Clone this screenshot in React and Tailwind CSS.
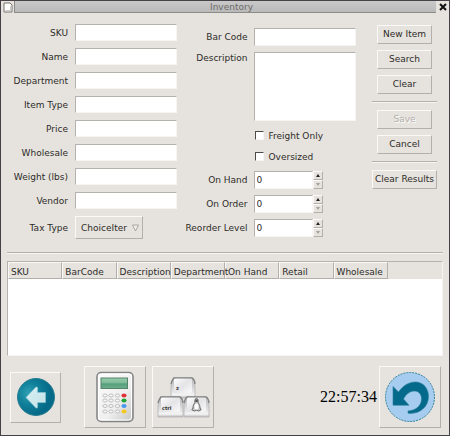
import React from "react";

const sunken =
  "border border-t-[#b5b1ac] border-l-[#b5b1ac] border-b-[#f6f5f3] border-r-[#f6f5f3] bg-white rounded-none outline-none";
const raised =
  "border border-t-[#faf9f8] border-l-[#faf9f8] border-b-[#b3afaa] border-r-[#b3afaa] bg-[#e6e3de]";

const leftFields = [
  ["sku", "SKU"],
  ["name", "Name"],
  ["department", "Department"],
  ["item-type", "Item Type"],
  ["price", "Price"],
  ["wholesale", "Wholesale"],
  ["weight", "Weight (lbs)"],
  ["vendor", "Vendor"],
];

const columns = ["SKU", "BarCode", "Description", "Department", "On Hand", "Retail", "Wholesale"];

function TitleBar() {
  return (
    <header className="flex h-3 items-stretch">
      <button aria-label="Window menu" className="flex w-[13px] items-center justify-center">
        <svg width="10" height="11" viewBox="0 0 10 11">
          <path d="M1 1H7L9 3V10H1Z" fill="#fff" stroke="#77736f" />
          <path d="M2.5 8.5H8M7.5 4V9" stroke="#cfccc8" fill="none" />
        </svg>
      </button>
      <h1 className="flex-1 border-b border-l border-[#8e8c89] bg-linear-to-b from-[#c9c9c9] to-[#b9b9b9] pl-3 text-center leading-[13px] text-[#6d6b69]">
        Inventory
      </h1>
      <button aria-label="Close" className="flex w-[13px] items-center justify-center">
        <svg width="8" height="8" viewBox="0 0 8 8">
          <path d="M1 1L7 7M7 1L1 7" stroke="#111" strokeWidth="2" />
        </svg>
      </button>
    </header>
  );
}

function Separator() {
  return <hr className="my-px h-[2px] w-full border-t border-b border-t-[#b3afaa] border-b-[#f6f5f3]" />;
}

function Spinner({ id, label }) {
  return (
    <>
      <label htmlFor={id} className="text-right">
        {label}
      </label>
      <div className="flex h-[18px] w-[69px]">
        <input id={id} defaultValue="0" className={`w-[59px] px-[2px] ${sunken}`} />
        <div className="flex w-[10px] flex-col">
          <button aria-label={`Increase ${label}`} className={`flex h-[9px] items-center justify-center ${raised}`}>
            <svg width="4" height="3" viewBox="0 0 4 3">
              <path d="M2 0L4 3H0Z" fill="#222" />
            </svg>
          </button>
          <button aria-label={`Decrease ${label}`} className={`flex h-[9px] items-center justify-center ${raised}`}>
            <svg width="4" height="3" viewBox="0 0 4 3">
              <path d="M0 0H4L2 3Z" fill="#a5a19c" />
            </svg>
          </button>
        </div>
      </div>
    </>
  );
}

function CheckBox({ label }) {
  return (
    <label className="flex h-[21px] items-center gap-[5px]">
      <input
        type="checkbox"
        className="size-[9px] appearance-none border border-t-[#4d4a47] border-l-[#4d4a47] border-r-[#f6f5f3] border-b-[#f6f5f3] bg-white checked:bg-[#4d4a47]"
      />
      {label}
    </label>
  );
}

function ActionButton({ children, wide, disabled }) {
  return (
    <button
      disabled={disabled}
      className={`h-[19px] whitespace-nowrap leading-[17px] disabled:text-[#b1ada8] disabled:[text-shadow:1px_1px_0_#fff] ${
        wide ? "w-[65px]" : "w-[55px]"
      } ${raised}`}
    >
      {children}
    </button>
  );
}

function BackIcon() {
  return (
    <svg width="40" height="40" viewBox="0 0 40 40">
      <defs>
        <radialGradient id="back-disc" cx="0.3" cy="0.4" r="0.6">
          <stop offset="0" stopColor="#2fa0b4" />
          <stop offset="0.5" stopColor="#10809a" />
          <stop offset="1" stopColor="#056a87" />
        </radialGradient>
        <linearGradient id="back-arrow" x1="0" y1="0" x2="1" y2="1">
          <stop offset="0" stopColor="#d9f1f3" />
          <stop offset="1" stopColor="#c3e2e8" />
        </linearGradient>
      </defs>
      <circle cx="20" cy="20" r="18.5" fill="url(#back-disc)" stroke="#2a7e92" />
      <path
        d="M10 20.5L20 10Q21.5 9.5 21.5 11V15.5H29.5V25.5H21.5V30Q21.5 31.5 20 31Z"
        fill="url(#back-arrow)"
        stroke="#8fc9d4"
        strokeWidth="0.6"
      />
    </svg>
  );
}

function CalculatorIcon() {
  const rows = [
    [24.5, "#e0343a"],
    [29.5, "#22a637"],
    [35, "#4a97ee"],
    [40.5, "#f4c81e"],
  ];
  return (
    <svg width="38" height="52" viewBox="0 0 38 52">
      <defs>
        <linearGradient id="calc-body" x1="0" y1="0" x2="1" y2="1">
          <stop offset="0" stopColor="#fdfdfd" />
          <stop offset="0.6" stopColor="#efefef" />
          <stop offset="1" stopColor="#c4c4c4" />
        </linearGradient>
        <linearGradient id="calc-screen" x1="0" y1="0" x2="0" y2="1">
          <stop offset="0" stopColor="#98ccac" />
          <stop offset="0.48" stopColor="#7dba97" />
          <stop offset="0.55" stopColor="#559e7c" />
          <stop offset="1" stopColor="#6fb08c" />
        </linearGradient>
      </defs>
      <rect x="1" y="1.5" width="36" height="49" rx="4" fill="url(#calc-body)" stroke="#808283" strokeWidth="1.5" />
      <rect x="2.5" y="3" width="33" height="46" rx="3" fill="none" stroke="#fff" />
      <rect x="5" y="7" width="26.5" height="10.5" fill="url(#calc-screen)" stroke="#56836b" />
      {rows.map(([y, color]) => (
        <g key={color}>
          {[9, 15, 21.5].map((x) => (
            <ellipse key={x} cx={x} cy={y} rx="2.2" ry="1.5" fill="#f7f7f7" stroke="#b0b0b0" strokeWidth="0.8" />
          ))}
          <ellipse cx="28" cy={y} rx="2.6" ry="1.9" fill={color} />
        </g>
      ))}
    </svg>
  );
}

function KeyCap({ x, y, width, children }) {
  return (
    <g transform={`translate(${x} ${y})`}>
      <path
        d={`M1 20V8Q2 4 4 1H${width - 4}Q${width - 1} 4 ${width - 1} 9V21H1Z`}
        fill="url(#key-side)"
        stroke="#b4b3b3"
        strokeWidth="0.8"
      />
      <rect x="4" y="1" width={width - 8} height="15" rx="2" fill="url(#key-top)" />
      <path
        d={`M1 7Q2 3 4 0.8H${width - 4}Q${width - 1} 3 ${width - 1} 7`}
        fill="none"
        stroke="#828182"
        strokeWidth="1.3"
      />
      {children}
    </g>
  );
}

function KeyboardIcon() {
  return (
    <svg width="53" height="43" viewBox="0 0 53 43" className="font-['DejaVu_Sans',sans-serif]">
      <defs>
        <linearGradient id="key-side" x1="0" y1="0" x2="0" y2="1">
          <stop offset="0" stopColor="#b5b5b7" />
          <stop offset="0.7" stopColor="#e6e6e8" />
          <stop offset="0.85" stopColor="#f6f6f7" />
          <stop offset="1" stopColor="#b8b8ba" />
        </linearGradient>
        <linearGradient id="key-top" x1="0" y1="0" x2="1" y2="1">
          <stop offset="0" stopColor="#fff" />
          <stop offset="0.5" stopColor="#e4e4e7" />
          <stop offset="1" stopColor="#fafafa" />
        </linearGradient>
      </defs>
      <KeyCap x={13} y={1} width={26}>
        <text x="6" y="13" fontSize="5" fontWeight="700" fill="#333">
          z
        </text>
      </KeyCap>
      <KeyCap x={0} y={20} width={27}>
        <text x="5" y="14" fontSize="5" fontWeight="700" fill="#333">
          ctrl
        </text>
      </KeyCap>
      <KeyCap x={26} y={20} width={27}>
        <path
          d="M13.5 2.5C11.8 2.5 11.8 4.5 11.9 6.5C10.8 8.5 9.8 10 10 12L8.8 13.8L11.5 15L13.5 14.2L15.5 15L18.200 13.8L17 12C17.2 10 16.2 8.5 15.1 6.5C15.200 4.5 15.200 2.5 13.5 2.5Z"
          fill="#c9c9ca"
          stroke="#5a5a5b"
          strokeWidth="0.9"
        />
        <path d="M12.300 3.500H14.700V6H12.300Z" fill="#555" />
        <ellipse cx="13.5" cy="10.5" rx="2" ry="3" fill="#fff" />
      </KeyCap>
    </svg>
  );
}

function UndoIcon() {
  return (
    <svg width="52" height="52" viewBox="0 0 52 52">
      <circle cx="26" cy="26" r="24.5" fill="#a6ccf0" stroke="#2d7f96" strokeDasharray="2 1" />
      <path
        d="M9 15.5L14.5 21C19 14.500 25 11 31.500 11C39.500 11.200 44.500 17.500 44.500 25.500C44.500 36 35.500 43.500 24 42.300V40C32 39.500 37.500 34.500 37.500 28C37.500 23 34.500 20 30.500 20C26 20 22 23 19.500 28L25 34.200H9Z"
        fill="#04698a"
        stroke="#27809b"
        strokeWidth="0.6"
      />
    </svg>
  );
}

function ToolButton({ label, small, children }) {
  return (
    <button
      aria-label={label}
      className={`flex shrink-0 items-center justify-center ${small ? "size-[51px]" : "size-[62px]"} ${raised}`}
    >
      {children}
    </button>
  );
}

export default function App() {
  return (
    <div className="flex min-h-screen flex-col border border-[#454146] bg-[#e6e3de] font-['DejaVu_Sans','Liberation_Sans',sans-serif] text-[9px] leading-3 text-[#2d2b29]">
      <TitleBar />

      <main className="flex flex-1 flex-col px-[6px]">
        <div className="flex items-start justify-between">
          <div className="mt-[11px] grid grid-cols-[61px_auto] items-center gap-x-[7px] gap-y-[7px]">
            {leftFields.map(([id, label]) => (
              <React.Fragment key={id}>
                <label htmlFor={id} className="text-right whitespace-nowrap">
                  {label}
                </label>
                <input id={id} className={`h-[17px] w-[102px] px-[2px] ${sunken}`} />
              </React.Fragment>
            ))}
            <label htmlFor="tax-type" className="text-right">
              Tax Type
            </label>
            <div className="grid w-[68px] items-center">
              <select
                id="tax-type"
                className={`col-start-1 row-start-1 h-[23px] appearance-none rounded-none pl-[5px] outline-none ${raised}`}
              >
                <option>ChoiceIter</option>
              </select>
              <svg
                className="pointer-events-none col-start-1 row-start-1 mr-1 justify-self-end"
                width="7"
                height="8"
                viewBox="0 0 7 8"
              >
                <path d="M0.5 1H6.5L3.5 7Z" fill="#f1efec" stroke="#9a9691" strokeWidth="0.8" />
              </svg>
            </div>
          </div>

          <div className="mt-[15px] mr-2 grid grid-cols-[auto_102px] items-center gap-x-[6px] gap-y-[6px]">
            <label htmlFor="bar-code" className="text-right">
              Bar Code
            </label>
            <input id="bar-code" className={`h-[18px] px-[2px] ${sunken}`} />
            <label htmlFor="description" className="self-start text-right">
              Description
            </label>
            <textarea id="description" className={`block h-[69px] resize-none px-[2px] ${sunken}`} />
            <div className="col-start-2 -my-[2px] pl-px">
              <CheckBox label="Freight Only" />
              <CheckBox label="Oversized" />
            </div>
            <Spinner id="on-hand" label="On Hand" />
            <Spinner id="on-order" label="On Order" />
            <Spinner id="reorder-level" label="Reorder Level" />
          </div>

          <div className="mt-3 mr-[6px] flex w-[65px] flex-col items-center gap-[6px]">
            <ActionButton>New Item</ActionButton>
            <ActionButton>Search</ActionButton>
            <ActionButton>Clear</ActionButton>
            <Separator />
            <ActionButton disabled>Save</ActionButton>
            <ActionButton>Cancel</ActionButton>
            <Separator />
            <ActionButton wide>Clear Results</ActionButton>
          </div>
        </div>

        <div className="mt-3">
          <Separator />
        </div>

        <div className={`mt-[6px] flex-1 ${sunken}`}>
          <table className="w-full table-fixed border-separate border-spacing-0">
            <thead>
              <tr className="bg-[#e6e3de]">
                {columns.map((name) => (
                  <th
                    key={name}
                    className={`h-[17px] w-[12.5%] pt-[3px] pl-[2px] text-left font-normal whitespace-nowrap ${raised}`}
                  >
                    {name}
                  </th>
                ))}
                <td />
              </tr>
            </thead>
          </table>
        </div>

        <footer className="mt-[10px] mb-[7px] flex items-center pr-[2px] pl-[3px]">
          <ToolButton label="Back" small>
            <BackIcon />
          </ToolButton>
          <div className="ml-[23px] flex gap-[6px]">
            <ToolButton label="Calculator">
              <CalculatorIcon />
            </ToolButton>
            <ToolButton label="Keyboard">
              <KeyboardIcon />
            </ToolButton>
          </div>
          <time className="mr-[2px] ml-auto font-['Liberation_Serif',serif] text-base text-black">22:57:34</time>
          <ToolButton label="Undo">
            <UndoIcon />
          </ToolButton>
        </footer>
      </main>
    </div>
  );
}
